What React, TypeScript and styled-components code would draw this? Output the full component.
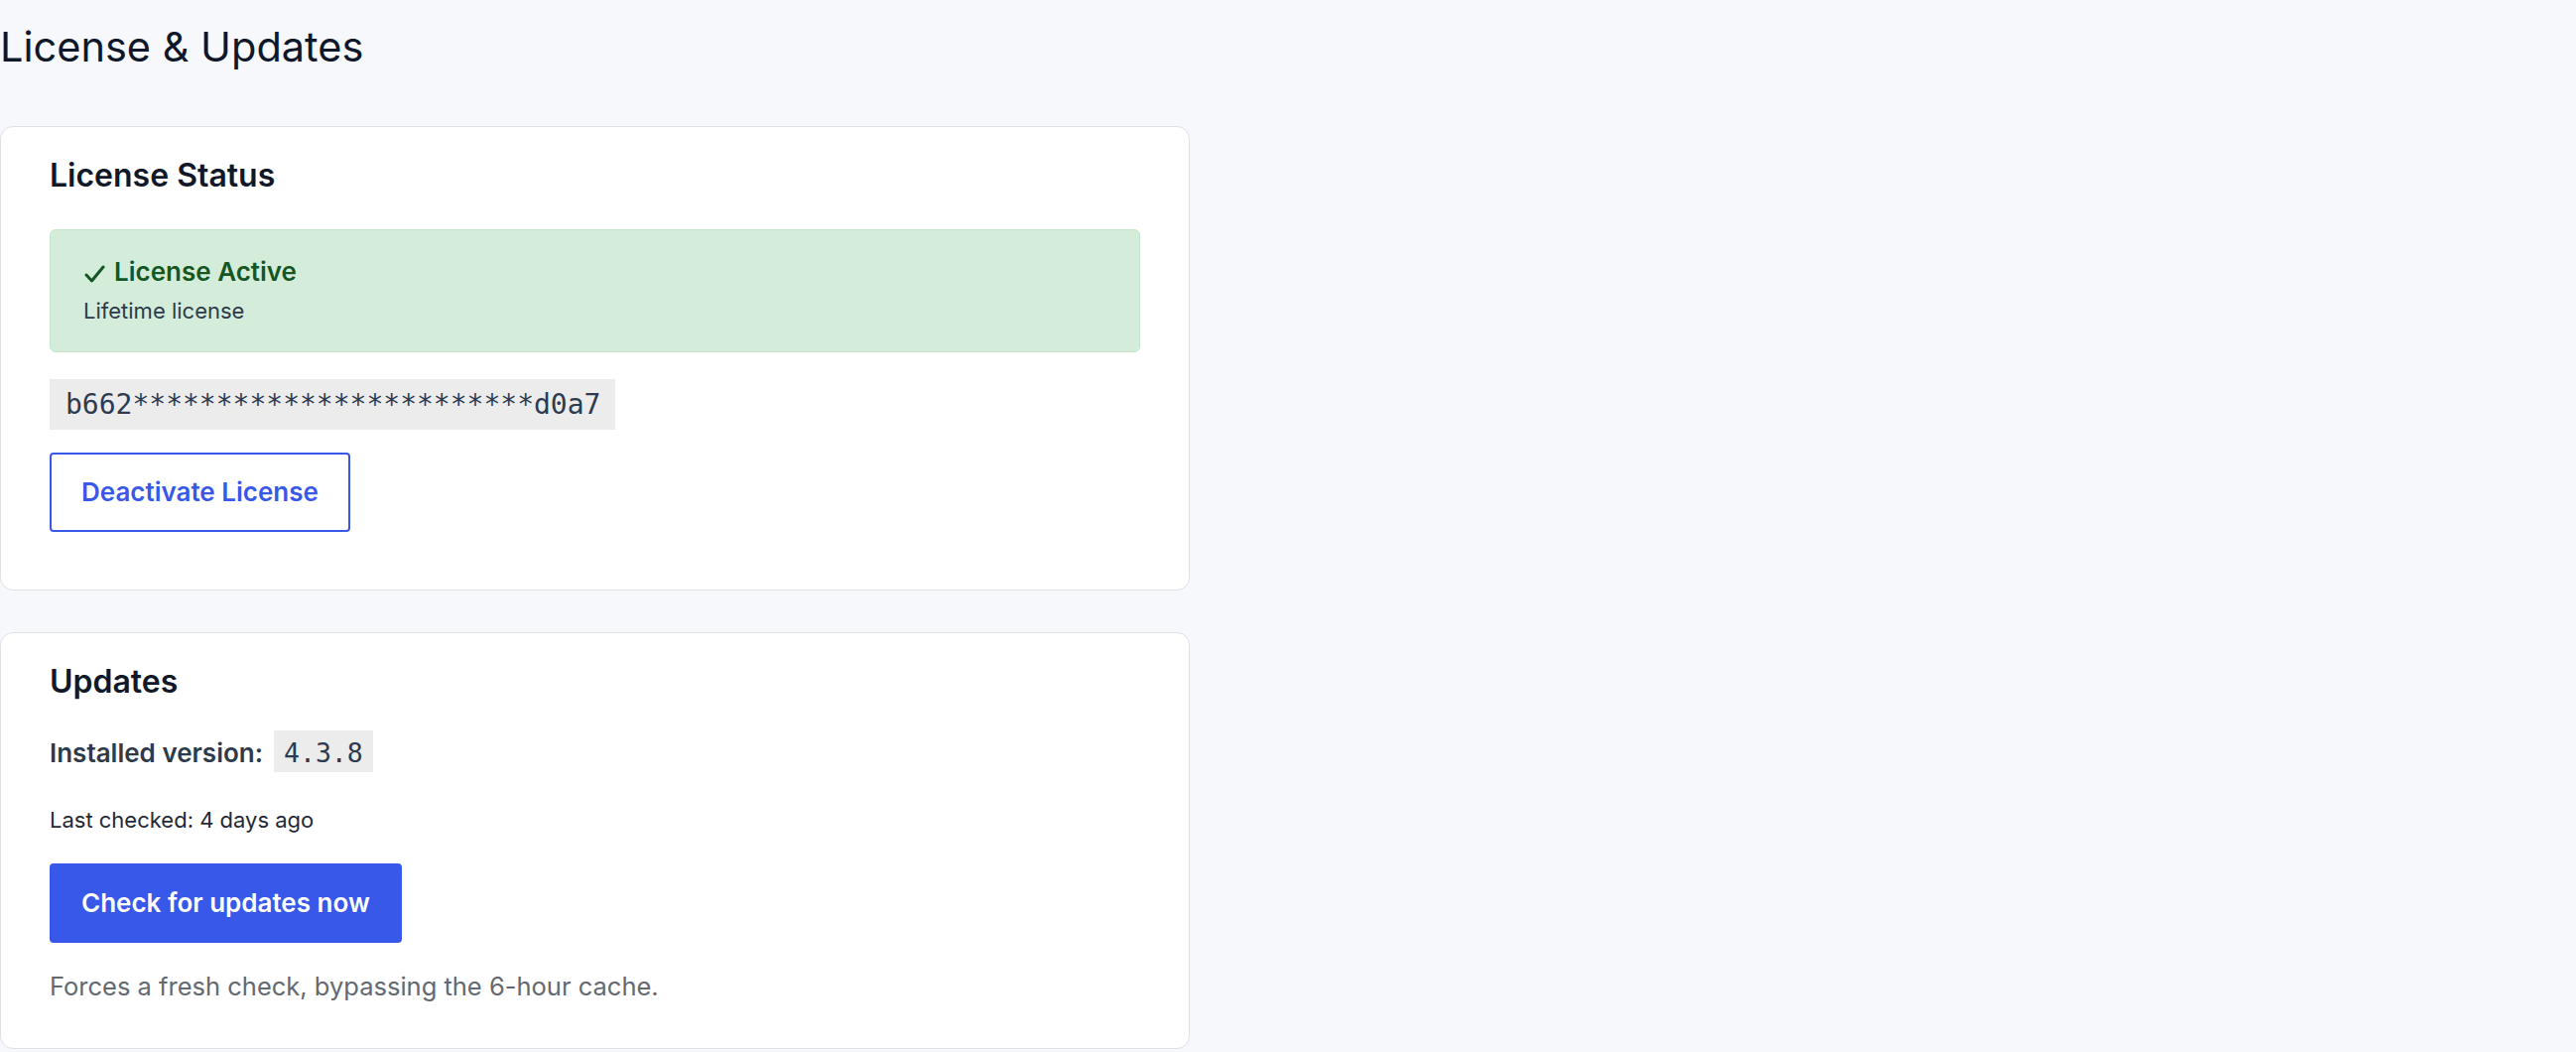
import React from "react";
import styled, { createGlobalStyle } from "styled-components";

const GlobalStyle = createGlobalStyle`
  html, body {
    margin: 0;
    padding: 0;
    background: #f7f8fb;
  }
  body {
    font-family: Inter, "Noto Sans", "Liberation Sans", sans-serif;
    color: #1f2937;
  }
  * { box-sizing: border-box; }
`;

const Page = styled.main`
  padding: 21px 0 0 0;
  min-height: 1060px;
`;

const PageTitle = styled.h1`
  margin: 0 0 53px 0;
  font-size: 41.5px;
  line-height: 53px;
  font-weight: 400;
  color: #0f172a;
`;

const Stack = styled.div`
  display: flex;
  flex-direction: column;
  gap: 42px;
  width: 1199px;
`;

const Card = styled.section`
  background: #ffffff;
  border: 1px solid #dfe1e6;
  border-radius: 13px;
  padding: 30px 49px 43px;
`;

const CardTitle = styled.h2`
  margin: 0;
  font-size: 32px;
  line-height: 38px;
  font-weight: 600;
  color: #111827;
`;

const StatusBox = styled.div`
  margin-top: 35px;
  background: #d4edda;
  border: 1px solid #c3e6cb;
  border-radius: 6px;
  padding: 26px 33px 26px;
`;

const StatusTitle = styled.div`
  display: flex;
  align-items: center;
  gap: 9px;
  font-size: 26px;
  line-height: 32px;
  font-weight: 600;
  color: #155724;
  margin-bottom: 8px;
`;

const CheckIcon = styled.svg`
  width: 21px;
  height: 18px;
  flex: none;
  margin: 3px 0 0 1px;
`;

const StatusSub = styled.div`
  font-size: 22px;
  line-height: 30px;
  color: #2d3a4a;
`;

const KeyCode = styled.code`
  display: inline-block;
  margin-top: 27px;
  background: #ececec;
  color: #2d3a4f;
  font-family: "DejaVu Sans Mono", "Liberation Mono", monospace;
  font-size: 28px;
  line-height: 33px;
  padding: 9px 15px 9px 16px;
`;

const ButtonRow = styled.div`
  margin-top: 23px;
  margin-bottom: 15px;
`;

const Button = styled.button<{ $variant: "outline" | "primary" }>`
  display: inline-block;
  font-family: Inter, "Noto Sans", "Liberation Sans", sans-serif;
  font-size: 26px;
  line-height: 32px;
  font-weight: 600;
  padding: 22px 30px;
  border-radius: 4px;
  border: 2px solid #3858e9;
  cursor: pointer;
  background: ${(p) => (p.$variant === "primary" ? "#3858e9" : "#ffffff")};
  color: ${(p) => (p.$variant === "primary" ? "#ffffff" : "#3858e9")};
`;

const VersionRow = styled.div`
  margin-top: 30px;
  display: flex;
  align-items: baseline;
  gap: 11px;
`;

const Label = styled.strong`
  font-size: 26px;
  font-weight: 600;
  color: #2d3a4a;
`;

const VersionCode = styled.code`
  display: inline-block;
  background: #ececec;
  color: #2d3a4f;
  font-family: "DejaVu Sans Mono", "Liberation Mono", monospace;
  font-size: 26.5px;
  padding: 7px 10px 4px;
`;

const Meta = styled.p`
  margin: 33px 0 0 0;
  font-size: 22px;
  line-height: 30px;
  color: #1f2937;
`;

const PrimaryRow = styled.div`
  margin-top: 29px;
`;

const Description = styled.p`
  margin: 24px 0 0 0;
  font-size: 25.5px;
  line-height: 39px;
  color: #646970;
`;

export default function App() {
  return (
    <>
      <GlobalStyle />
      <Page>
        <PageTitle>License &amp; Updates</PageTitle>
        <Stack>
          <Card>
            <CardTitle>License Status</CardTitle>
            <StatusBox>
              <StatusTitle>
                <CheckIcon viewBox="0 0 21 18" aria-hidden="true">
                  <path
                    d="M2 10 L7.5 16 L19 2"
                    fill="none"
                    stroke="#155724"
                    strokeWidth="3"
                    strokeLinecap="round"
                    strokeLinejoin="round"
                  />
                </CheckIcon>
                License Active
              </StatusTitle>
              <StatusSub>Lifetime license</StatusSub>
            </StatusBox>
            <KeyCode>b662************************d0a7</KeyCode>
            <ButtonRow>
              <Button $variant="outline">Deactivate License</Button>
            </ButtonRow>
          </Card>
          <Card>
            <CardTitle>Updates</CardTitle>
            <VersionRow>
              <Label>Installed version:</Label>
              <VersionCode>4.3.8</VersionCode>
            </VersionRow>
            <Meta>Last checked: 4 days ago</Meta>
            <PrimaryRow>
              <Button $variant="primary">Check for updates now</Button>
            </PrimaryRow>
            <Description>Forces a fresh check, bypassing the 6-hour cache.</Description>
          </Card>
        </Stack>
      </Page>
    </>
  );
}
